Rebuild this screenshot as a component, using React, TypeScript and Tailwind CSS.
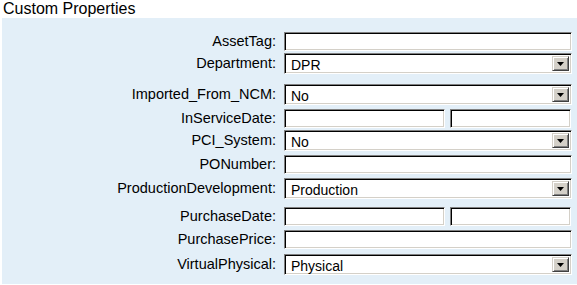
import React from "react";

// classic inset field border
const inset =
  "border border-t-[#808080] border-l-[#808080] border-r-white border-b-white shadow-[inset_1px_1px_0_#000,inset_-1px_-1px_0_#d4d0c8] bg-white";

function TextBox({ className = "" }: { className?: string }) {
  return <div className={`${inset} h-[19px] ${className}`} />;
}

function DropDown({ value }: { value: string }) {
  return (
    <div className={`${inset} h-[21px] w-full flex items-stretch p-[2px]`}>
      <div className="flex-1 pl-[4px] pt-[2px] text-[14px] leading-[15px] text-black">{value}</div>
      <div className="w-[17px] bg-[#d4d0c8] border border-t-[#d4d0c8] border-l-[#d4d0c8] border-r-[#404040] border-b-[#404040] shadow-[inset_1px_1px_0_#fff,inset_-1px_-1px_0_#808080] flex items-center justify-center">
        <svg width="7" height="4" viewBox="0 0 7 4">
          <path d="M0 0h7L3.5 4z" fill="#000" />
        </svg>
      </div>
    </div>
  );
}

type Row = { label: string; kind: "text" | "select" | "date"; value?: string; mt: string };

const rows: Row[] = [
  { label: "AssetTag:", kind: "text", mt: "mt-0" },
  { label: "Department:", kind: "select", value: "DPR", mt: "mt-[2px]" },
  { label: "Imported_From_NCM:", kind: "select", value: "No", mt: "mt-[10px]" },
  { label: "InServiceDate:", kind: "date", mt: "mt-[4px]" },
  { label: "PCI_System:", kind: "select", value: "No", mt: "mt-[2px]" },
  { label: "PONumber:", kind: "text", mt: "mt-[4px]" },
  { label: "ProductionDevelopment:", kind: "select", value: "Production", mt: "mt-[4px]" },
  { label: "PurchaseDate:", kind: "date", mt: "mt-[8px]" },
  { label: "PurchasePrice:", kind: "text", mt: "mt-[4px]" },
  { label: "VirtualPhysical:", kind: "select", value: "Physical", mt: "mt-[5px]" },
];

export default function App() {
  return (
    <div className="w-[577px] h-[285px] bg-white font-['Liberation_Sans',Arial,sans-serif] text-black overflow-hidden">
      <div className="pl-[3px] text-[16px] leading-[18px]">Custom Properties</div>
      <div className="ml-[2px] bg-[#e3eff8] pt-[14px] pb-[9px] pr-[5px]">
        {rows.map((r) => (
          <div key={r.label} className={`flex items-center ${r.mt}`}>
            <div className="w-[275px] text-right text-[14.5px] leading-[17px] pr-[1px] -mt-[1px]">{r.label}</div>
            <div className="ml-[7px] w-[288px]">
              {r.kind === "text" && <TextBox className="w-full" />}
              {r.kind === "select" && <DropDown value={r.value ?? ""} />}
              {r.kind === "date" && (
                <div className="flex gap-[5px]">
                  <TextBox className="w-[161px]" />
                  <TextBox className="w-[121px]" />
                </div>
              )}
            </div>
          </div>
        ))}
      </div>
    </div>
  );
}
